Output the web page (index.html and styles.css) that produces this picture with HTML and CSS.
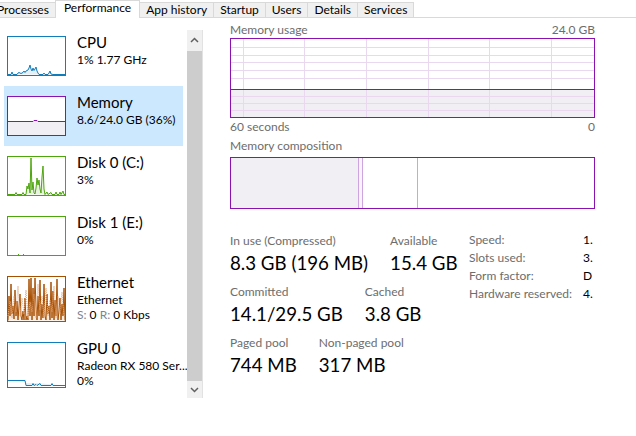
FILE: index.html
```html
<!DOCTYPE html>
<html>
<head>
<meta charset="utf-8">
<title>Task Manager - Performance</title>
<link rel="stylesheet" href="styles.css">
</head>
<body>
<div class="tabs">
  <div class="tab">Processes</div>
  <div class="tab active">Performance</div>
  <div class="tab">App history</div>
  <div class="tab">Startup</div>
  <div class="tab">Users</div>
  <div class="tab">Details</div>
  <div class="tab">Services</div>
</div>
<div class="main">
  <div class="sidebar">
    <div class="list">
      <div class="item">
        <svg class="thumb" viewBox="0 0 59 40" width="59" height="40">
          <rect x="0.5" y="0.5" width="58" height="39" fill="#fff" stroke="#117dbb"/>
          <polyline fill="#e3f0f8" stroke="#117dbb" stroke-width="1" points="1,38.5 4,38.5 5,36 6,38.5 10,38.5 11,37 12,36.5 14,37.5 16,36.5 17,35 18,36.5 19,35 21,34 22,32 23,29 24,33 25,35 26,32 27,34.5 28,33 29,31 30,35 31,37 32,38.5 36,38.5 37,37 38,38.5 41,38.5 42,37 43,35 44,38 46,38.5 58,38.5"/>
        </svg>
        <div class="text">
          <div class="title">CPU</div>
          <div class="sub">1% 1.77 GHz</div>
        </div>
      </div>
      <div class="item selected">
        <svg class="thumb" viewBox="0 0 59 40" width="59" height="40">
          <rect x="0.5" y="0.5" width="58" height="39" fill="#fff" stroke="#8b12ae"/>
          <polygon fill="#f1eff3" points="1,25.5 26,25.5 27,25 30,25 31,25.5 58,25.5 58,39 1,39"/>
          <polyline fill="none" stroke="#8b12ae" stroke-width="1" points="1,25.5 26,25.5 27,24.5 30,24.5 31,25.5 58,25.5"/>
        </svg>
        <div class="text">
          <div class="title">Memory</div>
          <div class="sub">8.6/24.0 GB (36%)</div>
        </div>
      </div>
      <div class="item">
        <svg class="thumb" viewBox="0 0 59 40" width="59" height="40">
          <rect x="0.5" y="0.5" width="58" height="39" fill="#fff" stroke="#4da60c"/>
          <polyline fill="#e8f3df" stroke="#4da60c" stroke-width="1" points="1,38.5 8,38.5 9,36.5 10,38.5 15,38.5 16,36.5 17,38.5 19,38.5 20,30 21,33 22,27 23,37 24,2 25,34 26,26 27,37 28,38 29,32 30,22 31,29 32,24 33,33 34,37 35,21 36,10 37,33 38,38.5 40,36 41,38.5 44,36.5 45,38.5 48,38.5 49,36 50,38.5 52,38.5 53,36 54,38.5 56,35 57,38.5 58,38.5"/>
        </svg>
        <div class="text">
          <div class="title">Disk 0 (C:)</div>
          <div class="sub">3%</div>
        </div>
      </div>
      <div class="item">
        <svg class="thumb" viewBox="0 0 59 40" width="59" height="40">
          <rect x="0.5" y="0.5" width="58" height="39" fill="#fff" stroke="#4da60c"/>
          <rect x="11" y="38" width="1" height="1" fill="#4da60c"/>
          <rect x="16" y="38" width="1" height="1" fill="#4da60c"/>
        </svg>
        <div class="text">
          <div class="title">Disk 1 (E:)</div>
          <div class="sub">0%</div>
        </div>
      </div>
      <div class="item tall">
        <svg class="thumb" viewBox="0 0 59 46" width="59" height="46">
          <rect x="0.5" y="0.5" width="58" height="45" fill="#fff" stroke="#a74f01"/>
          <polyline fill="#fbeadc" stroke="#a74f01" stroke-width="1" points="1,44.5 2,20 3,40 4,8 5,38 6,30 7,43 8,14 9,40 10,25 11,44 12,30 13,18 14,40 15,44 16,35 17,44 18,22 19,44 20,40 21,44 22,3 23,40 24,2 25,44 26,12 27,40 28,2 29,30 30,44 31,20 32,40 33,4 34,44 35,28 36,42 37,8 38,40 39,44 40,18 41,38 42,30 43,44 44,6 45,42 46,15 47,44 48,24 49,40 50,3 51,44 52,35 53,22 54,44 55,28 56,40 57,12 58,44.5"/>
          <polyline fill="none" stroke="#e6a679" stroke-width="1" stroke-dasharray="1 1" points="1,40 3,25 5,42 7,20 9,36 11,10 13,40 15,22 17,38 19,14 21,42 23,26 25,36 27,18 29,42 31,8 33,34 35,20 37,42 39,12 41,40 43,24 45,36 47,10 49,42 51,20 53,38 55,16 57,40"/>
        </svg>
        <div class="text">
          <div class="title">Ethernet</div>
          <div class="sub dark">Ethernet</div>
          <div class="sub"><span class="muted">S:</span> 0 <span class="muted">R:</span> 0 Kbps</div>
        </div>
      </div>
      <div class="item tall">
        <svg class="thumb" viewBox="0 0 59 46" width="59" height="46">
          <rect x="0.5" y="0.5" width="58" height="45" fill="#fff" stroke="#117dbb"/>
          <polyline fill="#e3f0f8" stroke="#117dbb" stroke-width="1" points="1,38.5 18,38.5 19,43.5 25,43.5 26,41.5 27,43.5 29,42.5 30,43.5 33,41.5 34,43.5 44,43.5 45,41.5 46,43.5 58,43.5"/>
        </svg>
        <div class="text">
          <div class="title">GPU 0</div>
          <div class="sub">Radeon RX 580 Ser...</div>
          <div class="sub">0%</div>
        </div>
      </div>
    </div>
    <div class="scrollbar">
      <div class="sb-btn up">
        <svg viewBox="0 0 15 21" width="15" height="21"><polyline points="4,12 7.5,8.5 11,12" fill="none" stroke="#606060" stroke-width="1.5"/></svg>
      </div>
      <div class="sb-thumb"></div>
      <div class="sb-btn down">
        <svg viewBox="0 0 15 17" width="15" height="17"><polyline points="4,7 7.5,10.5 11,7" fill="none" stroke="#606060" stroke-width="1.5"/></svg>
      </div>
    </div>
  </div>

  <div class="content">
    <div class="row-label">
      <span>Memory usage</span>
      <span>24.0 GB</span>
    </div>
    <div class="usage-graph">
      <svg viewBox="0 0 363 78" width="363" height="78" preserveAspectRatio="none">
        <rect x="0" y="51" width="363" height="27" fill="#f1eff3"/>
        <g stroke="#ead8f1" stroke-width="1">
          <line x1="0" y1="8.5" x2="363" y2="8.5"/>
          <line x1="0" y1="16.5" x2="363" y2="16.5"/>
          <line x1="0" y1="23.5" x2="363" y2="23.5"/>
          <line x1="0" y1="31.5" x2="363" y2="31.5"/>
          <line x1="0" y1="39.5" x2="363" y2="39.5"/>
          <line x1="0" y1="57.5" x2="363" y2="57.5"/>
          <line x1="0" y1="64.5" x2="363" y2="64.5"/>
          <line x1="0" y1="71.5" x2="363" y2="71.5"/>
          <line x1="12.5" y1="0" x2="12.5" y2="78"/>
          <line x1="73.5" y1="0" x2="73.5" y2="78"/>
          <line x1="135.5" y1="0" x2="135.5" y2="78"/>
          <line x1="197.5" y1="0" x2="197.5" y2="78"/>
          <line x1="258.5" y1="0" x2="258.5" y2="78"/>
          <line x1="320.5" y1="0" x2="320.5" y2="78"/>
        </g>
        <line x1="0" y1="50.5" x2="363" y2="50.5" stroke="#8b12ae" stroke-width="1"/>
      </svg>
    </div>
    <div class="row-label footer">
      <span>60 seconds</span>
      <span>0</span>
    </div>
    <div class="row-label section">
      <span>Memory composition</span>
    </div>
    <div class="composition">
      <div class="seg inuse"></div>
      <div class="seg modified"></div>
      <div class="seg standby"></div>
      <div class="seg free"></div>
    </div>

    <div class="stats">
      <div class="stats-main">
        <div class="stat-row">
          <div class="stat">
            <div class="label">In use (Compressed)</div>
            <div class="value">8.3 GB (196 MB)</div>
          </div>
          <div class="stat">
            <div class="label">Available</div>
            <div class="value">15.4 GB</div>
          </div>
        </div>
        <div class="stat-row">
          <div class="stat">
            <div class="label">Committed</div>
            <div class="value">14.1/29.5 GB</div>
          </div>
          <div class="stat">
            <div class="label">Cached</div>
            <div class="value">3.8 GB</div>
          </div>
        </div>
        <div class="stat-row">
          <div class="stat">
            <div class="label">Paged pool</div>
            <div class="value">744 MB</div>
          </div>
          <div class="stat">
            <div class="label">Non-paged pool</div>
            <div class="value">317 MB</div>
          </div>
        </div>
      </div>
      <div class="stats-side">
        <div class="kv"><span class="k">Speed:</span><span class="v">1.</span></div>
        <div class="kv"><span class="k">Slots used:</span><span class="v">3.</span></div>
        <div class="kv"><span class="k">Form factor:</span><span class="v">D</span></div>
        <div class="kv"><span class="k">Hardware reserved:</span><span class="v">4.</span></div>
      </div>
    </div>
  </div>
</div>
</body>
</html>
```

FILE: styles.css
```css
* { box-sizing: border-box; }
html, body { margin: 0; padding: 0; }
body {
  width: 636px;
  height: 436px;
  overflow: hidden;
  background: #fff;
  color: #000;
  font-family: Lato, "Noto Sans", sans-serif;
  font-size: 12px;
}

/* Tabs */
.tabs {
  display: flex;
  align-items: flex-end;
  height: 18px;
  margin-left: -10px;
  border-bottom: 1px solid #d9d9d9;
}
.tab {
  height: 15px;
  padding: 0 6px;
  border: 1px solid #d9d9d9;
  border-bottom: none;
  margin-right: -1px;
  background: #f0f0f0;
  line-height: 14px;
  white-space: nowrap;
}
.tab.active {
  height: 18px;
  margin-bottom: -1px;
  padding: 0 8px 4px;
  background: #fff;
  line-height: 13px;
  position: relative;
  z-index: 1;
}

/* Main */
.main {
  display: flex;
  height: 418px;
}
.sidebar {
  display: flex;
  width: 203px;
  flex: none;
}
.list {
  width: 179px;
  margin-left: 4px;
  padding-top: 8px;
}
.item {
  display: flex;
  align-items: flex-start;
  height: 60px;
  padding: 10px 0 0 3px;
}
.item.tall { height: 66px; }
.item.selected { background: #cce8ff; }
.thumb { flex: none; display: block; }
.text {
  margin-left: 11px;
  margin-top: -3px;
  white-space: nowrap;
}
.title {
  font-size: 15px;
  line-height: 19px;
}
.sub {
  font-size: 12px;
  line-height: 15px;
}
.muted { color: #7a8591; }

.scrollbar {
  width: 16px;
  margin-left: 4px;
  margin-top: 12px;
  height: 368px;
  display: flex;
  flex-direction: column;
  background: #f0f0f0;
  border-right: 1px solid #e2e2e2;
}
.sb-btn { flex: none; }
.sb-btn svg { display: block; }
.sb-thumb {
  flex: 1;
  background: #cdcdcd;
}

/* Content */
.content {
  width: 365px;
  margin-left: 27px;
  padding-top: 4px;
}
.row-label {
  display: flex;
  justify-content: space-between;
  color: #6d6d6d;
  font-size: 12px;
  line-height: 16px;
}
.row-label.footer { margin-top: 1px; }
.row-label.section { margin-top: 3px; margin-bottom: 3px; }
.usage-graph {
  height: 80px;
  border: 1px solid #8b12ae;
}
.usage-graph svg { display: block; }

.composition {
  display: flex;
  height: 52px;
  border: 1px solid #8b12ae;
}
.seg { height: 100%; }
.seg.inuse { width: 128px; background: #f1eff3; border-right: 1px solid #cfa3df; }
.seg.modified { width: 4px; background: #f7f4f8; border-right: 1px solid #cfa3df; }
.seg.standby { width: 55px; border-right: 1px solid #cfa3df; }
.seg.free { flex: 1; }

.stats {
  display: flex;
  margin-top: 23px;
}
.stats-main { width: 239px; flex: none; }
.stat-row {
  display: flex;
  gap: 22px;
  margin-bottom: 6px;
}
.label {
  color: #6d6d6d;
  font-size: 12px;
  line-height: 17px;
  white-space: nowrap;
}
.value {
  font-size: 18.7px;
  line-height: 28px;
  white-space: nowrap;
}
.stats-side { margin-top: -1px; }
.kv {
  display: flex;
  line-height: 18px;
  white-space: nowrap;
}
.k { width: 114px; color: #6d6d6d; }
.v { color: #000; }
```
